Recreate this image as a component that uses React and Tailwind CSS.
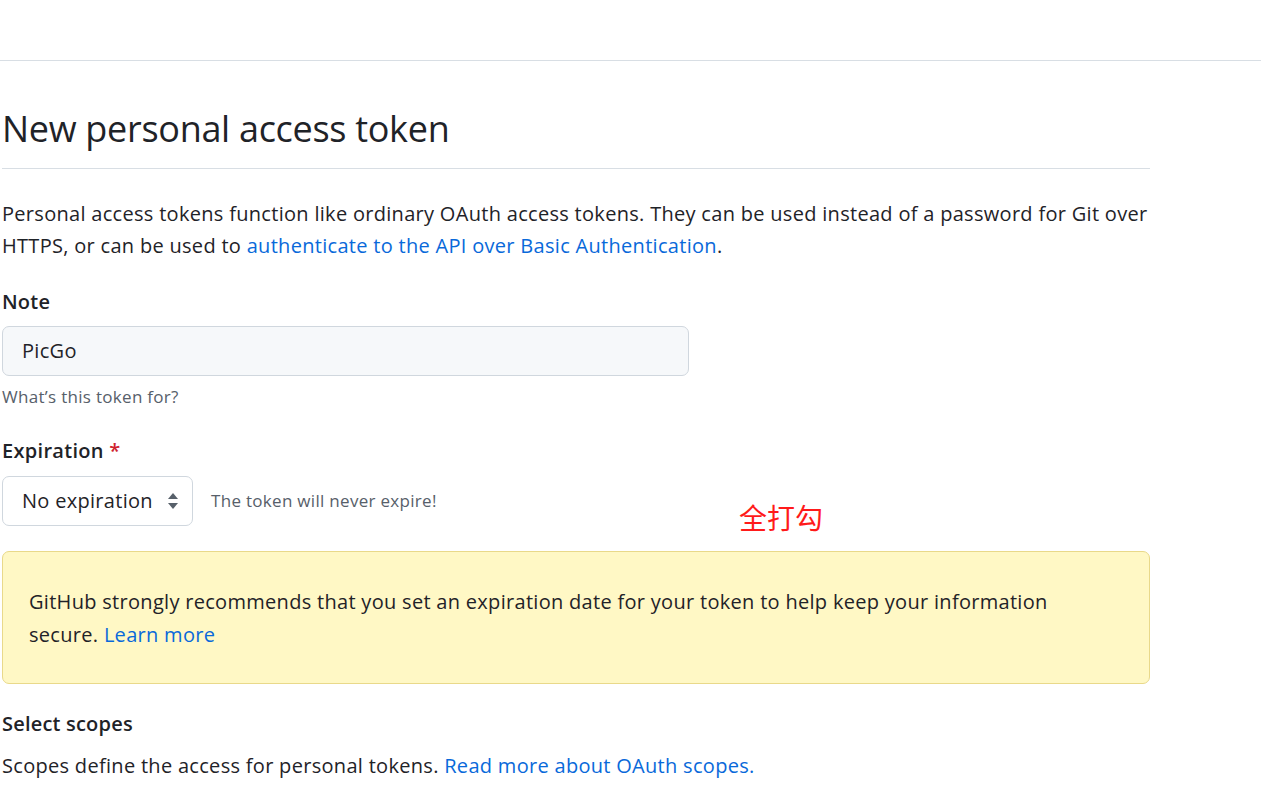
export default function App() {
  return (
    <div className="min-h-[790px] bg-white text-[#1f2328]" style={{ fontFamily: '"Open Sans", "Noto Sans CJK SC", sans-serif' }}>
      {/* top bar edge */}
      <div className="h-[61px] border-b border-[#d8dee4]" />

      <div className="w-[1150px] pl-[2px]">
        {/* Subhead */}
        <div className="mt-[40px] border-b border-[#d8dee4] pb-[11px]">
          <h1 className="text-[36px] font-normal leading-[56px] tracking-[-0.3px]">New personal access token</h1>
        </div>

        <p className="mt-[29px] text-[20px] leading-[32px] tracking-[0.3px]">
          Personal access tokens function like ordinary OAuth access tokens. They can be used instead of a password for Git over HTTPS, or can be used to{' '}
          <a href="#" className="text-[#0969da]">authenticate to the API over Basic Authentication</a>.
        </p>

        {/* Note */}
        <div className="mt-[25px]">
          <label className="block text-[20px] font-semibold leading-[30px] tracking-[0.2px]">Note</label>
          <div className="mt-[9px] flex h-[50px] w-[687px] items-center rounded-[7px] border border-[#d0d7de] bg-[#f6f8fa] px-[19px] text-[20px] tracking-[0.3px]">
            PicGo
          </div>
          <p className="mt-[8px] text-[17px] leading-[26px] text-[#57606a] tracking-[0.3px]">What’s this token for?</p>
        </div>

        {/* Expiration */}
        <div className="relative mt-[26px]">
          <label className="block text-[20px] font-semibold leading-[30px] tracking-[0.3px]">
            Expiration <span className="text-[#cf222e]">*</span>
          </label>
          <div className="mt-[10px] flex items-center gap-[18px]">
            <div className="flex h-[50px] w-[191px] items-center justify-between rounded-[7px] border border-[#d0d7de] bg-white pl-[19px] pr-[13px] text-[20px] tracking-[0.3px]">
              <span>No expiration</span>
              <svg width="12" height="18" viewBox="0 0 12 18" className="text-[#57606a]">
                <path d="M6 1 L11 7 H1 Z" fill="currentColor" />
                <path d="M6 17 L11 11 H1 Z" fill="currentColor" />
              </svg>
            </div>
            <span className="text-[17px] text-[#57606a] tracking-[0.3px]">The token will never expire!</span>
          </div>
          <span className="absolute left-[737px] top-[64px] text-[28px] leading-[36px] text-[#ff1a1a]">全打勾</span>
        </div>

        {/* Flash warning */}
        <div className="mt-[25px] rounded-[7px] border border-[#e9d98a] bg-[#fff8c5] px-[26px] pt-[33px] pb-[32px]">
          <p className="text-[20px] leading-[33px] tracking-[0.3px] pr-[40px]">
            GitHub strongly recommends that you set an expiration date for your token to help keep your information secure.{' '}
            <a href="#" className="text-[#0969da]">Learn more</a>
          </p>
        </div>

        {/* Scopes */}
        <h3 className="mt-[25px] text-[20px] font-semibold leading-[30px] tracking-[0.2px]">Select scopes</h3>
        <p className="mt-[11px] text-[20px] leading-[32px] tracking-[0.3px]">
          Scopes define the access for personal tokens.{' '}
          <a href="#" className="text-[#0969da]">Read more about OAuth scopes.</a>
        </p>
      </div>
    </div>
  )
}
